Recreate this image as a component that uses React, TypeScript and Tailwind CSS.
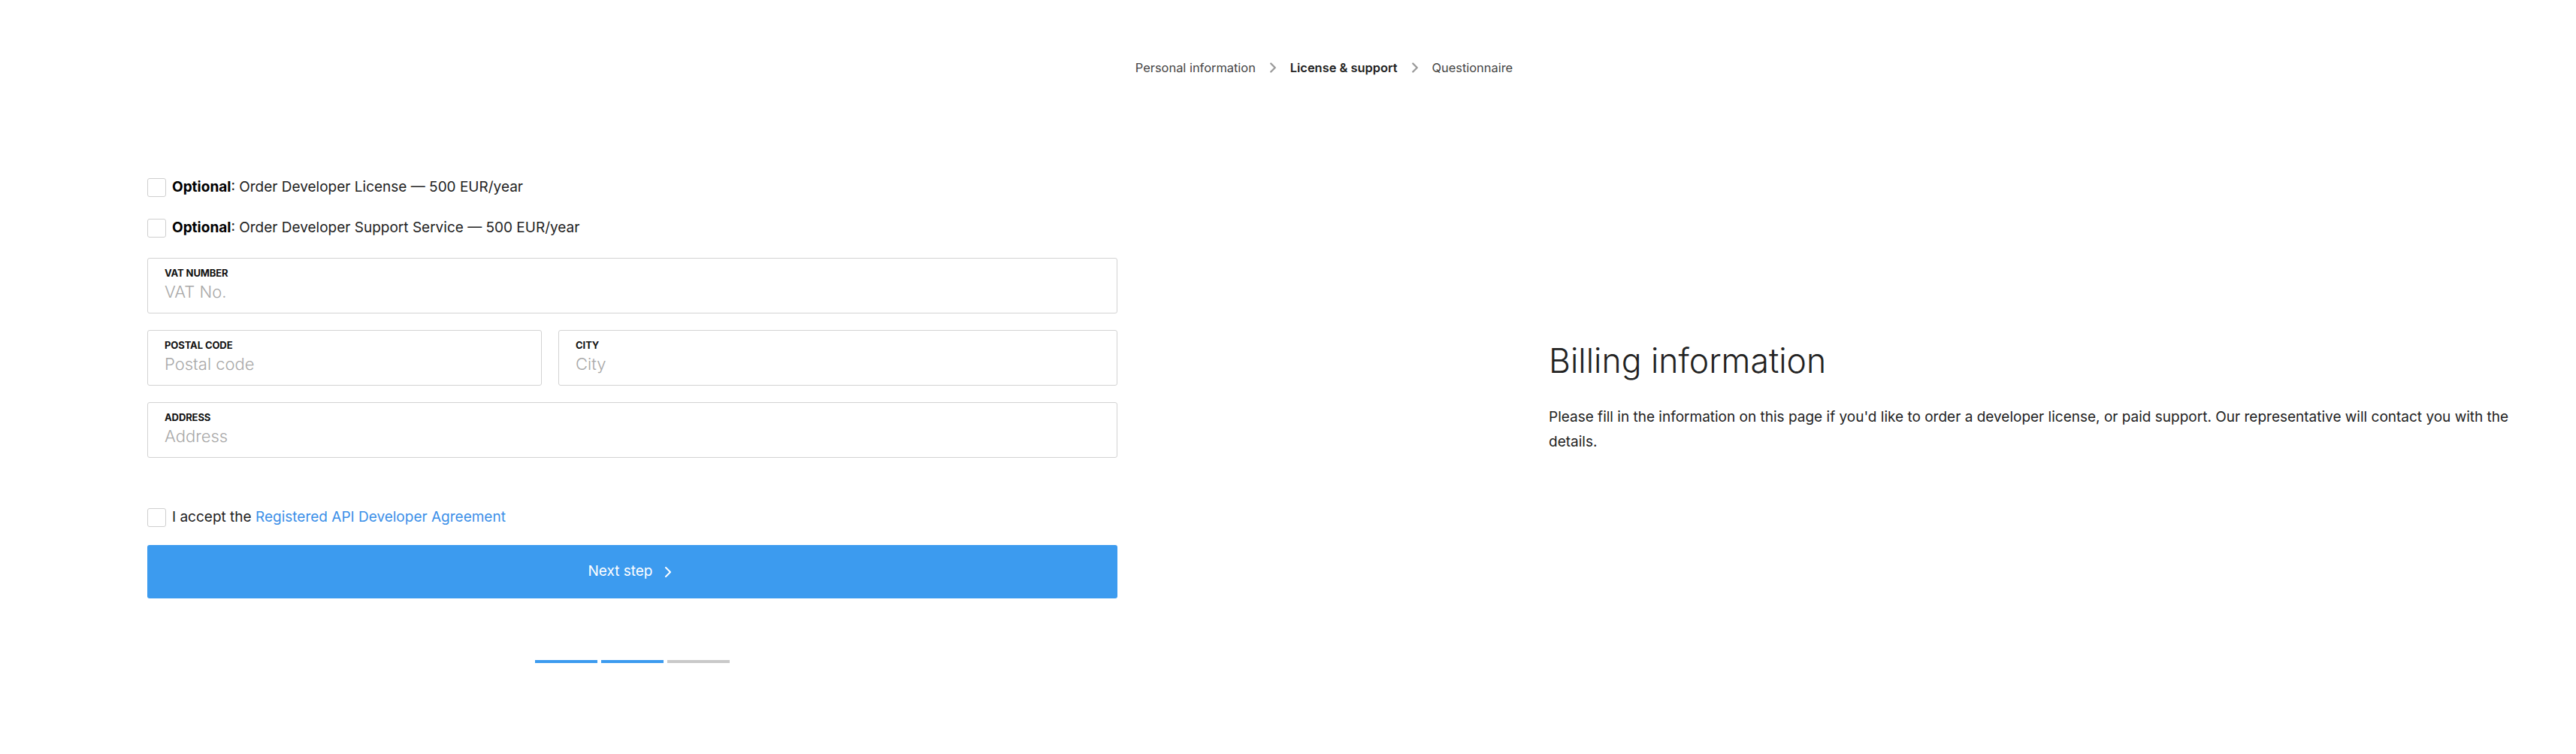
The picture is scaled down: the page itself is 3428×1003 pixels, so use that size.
import { ChevronRight } from "lucide-react";

type Field = {
  label: string;
  placeholder: string;
};

function Checkbox() {
  return (
    <span className="block h-[25px] w-[25px] shrink-0 rounded-[3px] border border-[#cfcfcf] bg-white" />
  );
}

function TextField({ label, placeholder }: Field) {
  return (
    <label className="flex h-[74px] flex-col rounded-[3px] border border-[#d3d3d3] bg-white px-[22px] pt-[11px]">
      <span className="text-[13px] font-bold uppercase leading-[17px] tracking-[-0.1px] text-[#111]">
        {label}
      </span>
      <input
        placeholder={placeholder}
        className="mt-[3px] w-full bg-transparent text-[22px] font-light leading-[26px] text-[#222] outline-none placeholder:text-[#a8a8a8]"
      />
    </label>
  );
}

export default function App() {
  const steps = [
    { name: "Personal information", active: false },
    { name: "License & support", active: true },
    { name: "Questionnaire", active: false },
  ];

  return (
    <div className="min-h-screen bg-white font-['Inter','Liberation_Sans',sans-serif] text-[#222]">
      {/* BREADCRUMB */}
      <nav className="flex justify-center pl-[96px] pt-[78px]">
        {steps.map((step, index) => (
          <div key={step.name} className="flex h-6 items-center">
            {index > 0 && (
              <ChevronRight
                size={22}
                strokeWidth={2.6}
                className="mx-[12px] text-[#9a9a9a]"
              />
            )}
            <span
              className={`text-[16.4px] ${
                step.active ? "font-semibold text-[#222]" : "text-[#444]"
              }`}
            >
              {step.name}
            </span>
          </div>
        ))}
      </nav>

      <div className="mt-[135px] flex items-start">
        {/* FORM */}
        <div className="ml-[196px] w-[1291px]">
          <div className="flex h-[25px] items-center gap-[8px] text-[19px]">
            <Checkbox />
            <p>
              <span className="font-bold text-black">Optional</span>: Order
              Developer License — 500 EUR/year
            </p>
          </div>
          <div className="mt-[29px] flex h-[25px] items-center gap-[8px] text-[19px]">
            <Checkbox />
            <p>
              <span className="font-bold text-black">Optional</span>: Order
              Developer Support Service — 500 EUR/year
            </p>
          </div>

          <div className="mt-[27px] flex flex-col gap-[22px]">
            <TextField label="VAT number" placeholder="VAT No." />
            <div className="grid grid-cols-12 gap-[22px]">
              <div className="col-span-5">
                <TextField label="Postal code" placeholder="Postal code" />
              </div>
              <div className="col-span-7">
                <TextField label="City" placeholder="City" />
              </div>
            </div>
            <TextField label="Address" placeholder="Address" />
          </div>

          <div className="mt-[67px] flex h-[25px] items-center gap-[8px] text-[19px]">
            <Checkbox />
            <p>
              I accept the{" "}
              <a className="text-[#3b8fe8]">Registered API Developer Agreement</a>
            </p>
          </div>

          <button className="mt-[24px] flex h-[71px] w-full items-center justify-center rounded-[3px] bg-[#3c9bef] text-[19px] text-white">
            Next step
            <ChevronRight size={24} strokeWidth={2} className="ml-[8px]" />
          </button>

          <div className="mt-[82px] flex justify-center gap-[5px]">
            <span className="h-[4px] w-[83px] bg-[#3c9bef]" />
            <span className="h-[4px] w-[83px] bg-[#3c9bef]" />
            <span className="h-[4px] w-[83px] bg-[#c9c9c9]" />
          </div>
        </div>

        {/* BILLING INFO */}
        <div className="ml-[574px] w-[1300px] pt-[217px]">
          <h2 className="text-[44.5px] font-light leading-[52px] text-[#222]">
            Billing information
          </h2>
          <p className="mt-[32px] text-[19px] leading-[33px] text-[#222]">
            Please fill in the information on this page if you'd like to order a
            developer license, or paid support. Our representative will contact
            you with the details.
          </p>
        </div>
      </div>
    </div>
  );
}
